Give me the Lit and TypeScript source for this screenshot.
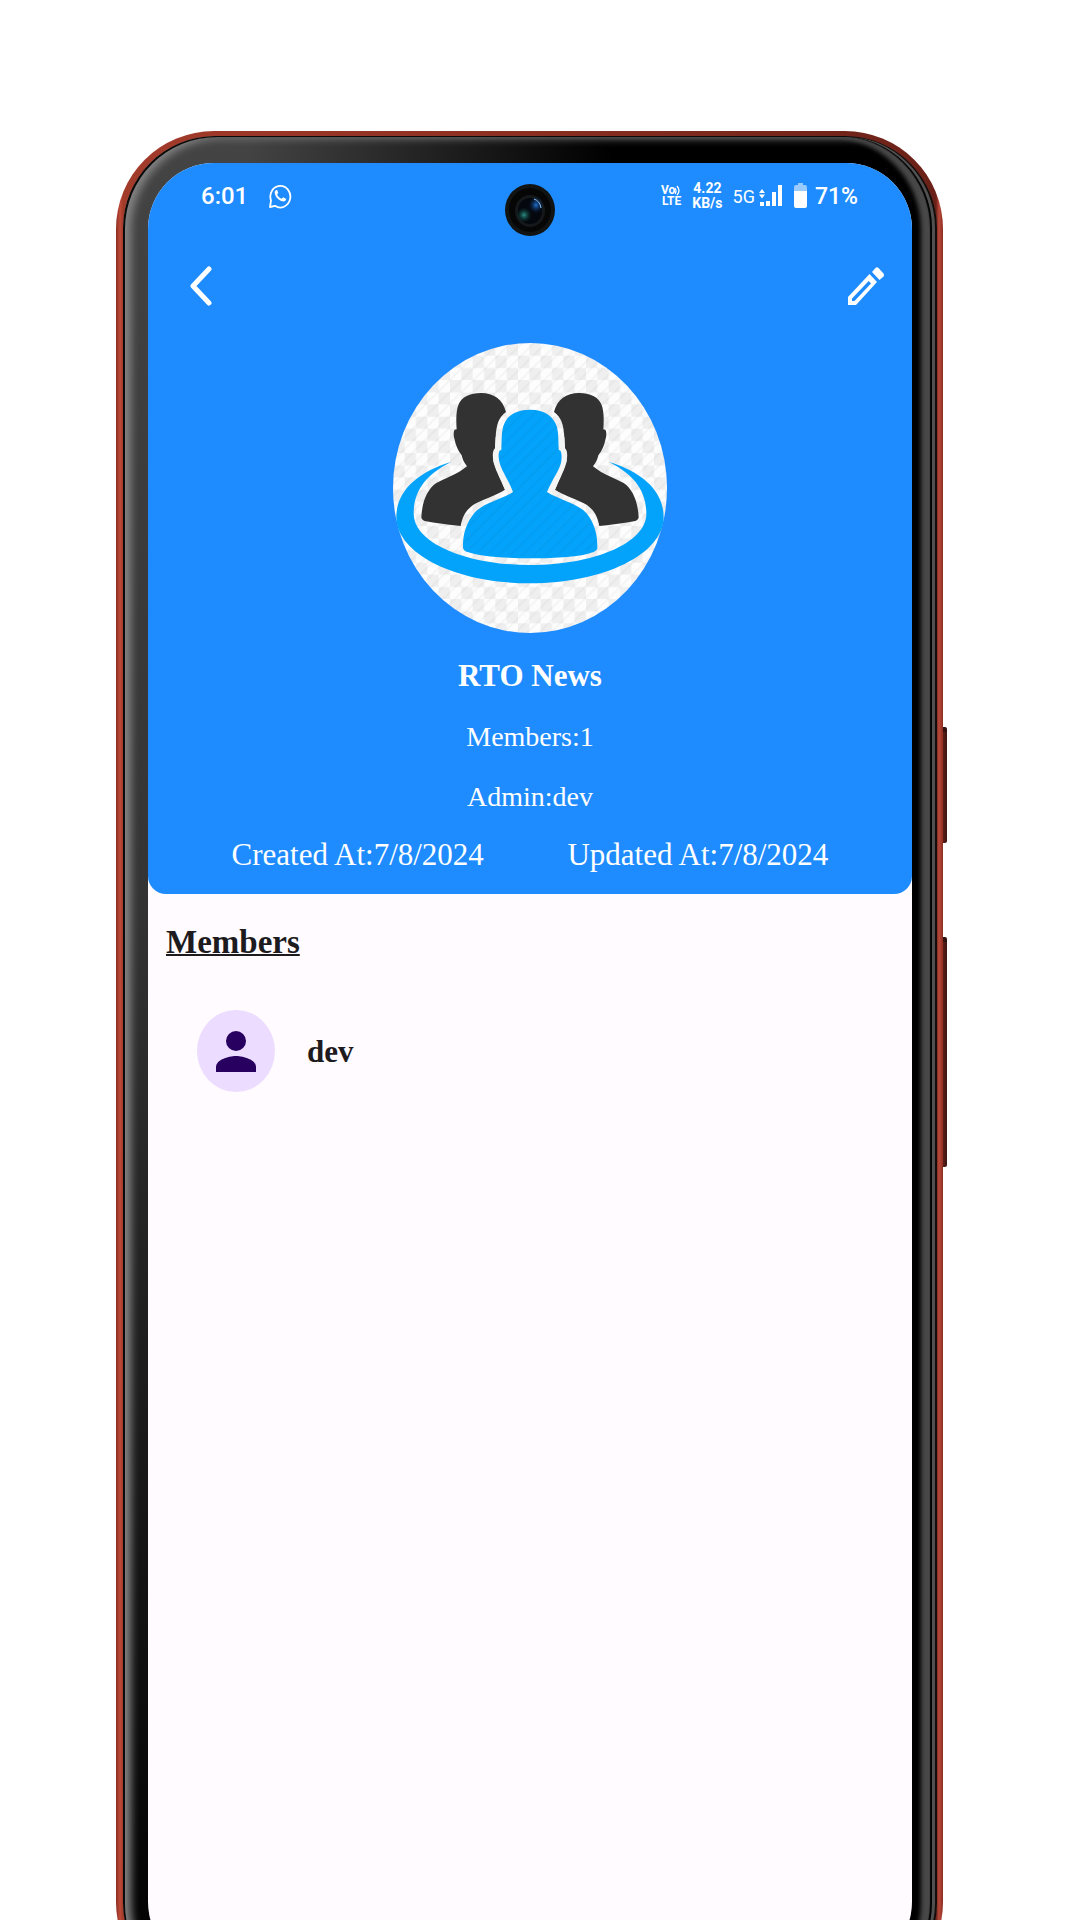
import { LitElement, html, css, svg } from "lit";
import { customElement, property } from "lit/decorators.js";

interface Member {
  name: string;
}

@customElement("status-bar")
class StatusBar extends LitElement {
  static styles = css`
    :host {
      display: flex;
      align-items: center;
      justify-content: space-between;
      height: 66px;
      padding: 0 54px 0 53px;
      color: #fff;
      font-family: Roboto, sans-serif;
      font-weight: 500;
    }
    .side {
      display: flex;
      align-items: center;
    }
    .left {
      gap: 20px;
      font-size: 24px;
    }
    .volte {
      margin-right: 10px;
    }
    .lines {
      display: flex;
      flex-direction: column;
      font-weight: 700;
    }
    .lines small {
      font-size: 12px;
      line-height: 11px;
    }
    .vo {
      display: flex;
    }
    .rate {
      font-size: 14px;
      line-height: 15px;
      margin-right: 10px;
    }
    .net {
      font-size: 18px;
      font-weight: 400;
      margin-right: 4px;
    }
    .battery {
      margin: 0 8px 0 12px;
    }
    .pct {
      font-size: 23px;
    }
    svg {
      display: block;
      fill: currentColor;
    }
  `;

  render() {
    return html`
      <div class="side left">
        <span>6:01</span>
        <svg width="24" height="26" viewBox="0 0 24 26" role="img" aria-label="WhatsApp">
          <path d="M2 24l1-6.500A10 10.800 0 1 1 7 22.800z" fill="none" stroke="#fff" stroke-width="1.800" stroke-linejoin="round" />
          <path d="M8.300 7c-1.600.8-2 2.500-1.300 4.400 1.500 3.900 4.600 6.600 8.300 7.200 1.500.1 2.800-.9 2.900-2.500l-3-1.800-1.600 1.500c-2.200-.9-3.700-2.500-4.500-4.600L10.300 9.900 9.200 7z" />
        </svg>
      </div>
      <div class="side">
        <div class="lines volte">
          <small class="vo">Vo<svg width="7" height="11" viewBox="0 0 7 11" aria-hidden="true"><path d="M0 3q2 3 0 6M2 1q4 5 0 9" fill="none" stroke="#fff" stroke-width="1.300" /></svg></small>
          <small>LTE</small>
        </div>
        <div class="lines rate"><span>4.22</span><span>KB/s</span></div>
        <span class="net">5G</span>
        <svg width="23" height="22" viewBox="0 0 23 22" role="img" aria-label="Signal">
          <path d="M0 8l3-4 3 4zM0 9.500h6l-3 4zM1 17h4v4H1zM7 16h4v5H7zM13 7h4v14h-4zM19 0h4v21h-4z" />
        </svg>
        <svg class="battery" width="13" height="26" viewBox="0 0 13 26" role="img" aria-label="Battery">
          <path d="M4 0h5v2h2q2 0 2 2v4H0V4q0-2 2-2h2z" opacity=".55" />
          <path d="M0 8h13v15q0 2-2 2H2q-2 0-2-2z" />
        </svg>
        <span class="pct">71%</span>
      </div>
    `;
  }
}

@customElement("group-avatar")
class GroupAvatar extends LitElement {
  static styles = css`
    :host,
    svg {
      display: block;
    }
  `;

  render() {
    const side = svg`
      <path fill="#323232" d="M123 560C126 510 142 476 168 458C190 446 232 432 260 408C250 396 246 384 244 375C232 358 226 345 223 328C219 318 219 304 223 298L229 297C227 270 227 240 235 222C244 200 268 188 302 188C340 188 368 208 377 245C356 260 348 282 346 320L344 354C337 360 336 372 339 392C342 412 360 446 374 478C350 494 300 510 278 524C256 540 246 560 241 587C204 583 165 579 133 572Q123 568 123 560Z" />`;
    return html`
      <svg width="274" height="290" viewBox="38 38 822 870" role="img" aria-label="Group picture">
        <defs>
          <clipPath id="round"><ellipse cx="449" cy="473" rx="411" ry="435" /></clipPath>
          <pattern id="checker" x="5" y="3" width="68" height="73" patternUnits="userSpaceOnUse">
            <path fill="#fdfdfd" d="M0 0h68v73H0z" />
            <path fill="#efefef" d="M0 0h34v37H0zM34 37h34v36H34z" />
          </pattern>
          <pattern id="stripe" width="25" height="25" patternUnits="userSpaceOnUse" patternTransform="rotate(45)">
            <path fill="#000" opacity=".03" d="M0 0h6v25H0z" />
          </pattern>
        </defs>
        <g clip-path="url(#round)">
          <path fill="url(#checker)" d="M38 38h822v870H38z" />
          <path fill="url(#stripe)" d="M38 38h822v870H38z" />
        </g>
        ${side}
        <g transform="matrix(-1 0 0 1 898 0)">${side}</g>
        <path fill="#03a3fb" d="M212 395C110 425 48 484 48 560C48 670 226 759 449 759S850 670 850 560C850 484 788 425 686 395C760 432 798 480 798 550C798 638 640 704 449 704S100 638 100 550C100 480 138 432 212 395Z" />
        <path fill="#f3f4f4" d="M346 320L344 354L339 392L374 478L398 485L358 398L363 358L366 310ZM552 320L554 354L559 392L524 478L500 485L540 398L535 358L532 310Z" />
        <path fill="#03a3fb" d="M449 238C495 238 520 258 530 290C535 310 534 335 535 358L541 362Q546 375 542 398C534 425 520 440 500 485C530 506 590 518 618 548C642 578 652 610 651 655Q646 664 632 667C575 690 323 690 262 665Q250 662 248 652C247 610 258 578 282 548C308 518 368 506 398 485C380 440 366 425 358 398Q352 375 357 362L363 358C364 335 363 310 368 290C378 258 403 238 449 238Z" />
        <path fill="url(#stripe)" d="M368 290Q390 240 449 240T530 290L542 390L500 485Q640 520 650 655Q449 700 250 655Q258 520 398 485L357 390Z" />
      </svg>
    `;
  }
}

@customElement("app-root")
class AppRoot extends LitElement {
  @property() groupName = "RTO News";
  @property() admin = "dev";
  @property() createdAt = "7/8/2024";
  @property() updatedAt = "7/8/2024";
  @property({ attribute: false }) members: Member[] = [{ name: "dev" }];

  static styles = css`
    :host {
      display: flex;
      flex-direction: column;
      box-sizing: border-box;
      height: 100vh;
      overflow: hidden;
      padding: 131px 137px 0 116px;
      background: #fff;
      font-family: "Liberation Serif", serif;
    }
    .phone {
      position: relative;
      flex: 1;
      display: flex;
      margin-bottom: -80px;
      padding: 5px 6px 5px 7px;
      border-radius: 98px;
      background: linear-gradient(to right, #8c2d20, #bd4a38 4px, #a33b2b 7px, #8a2f22 50%, #6b2118 calc(100% - 7px), #b8493a calc(100% - 4px), #8c2d20);
    }
    .key {
      position: absolute;
      left: 100%;
      width: 4px;
      border-radius: 0 2px 2px 0;
      background: linear-gradient(to right, #5e2018, #3c1410);
      border-top: 5px solid #301210;
      box-sizing: border-box;
    }
    .volume {
      top: 596px;
      height: 116px;
    }
    .power {
      top: 806px;
      height: 230px;
    }
    .bezel {
      flex: 1;
      display: flex;
      padding: 27px 25px 27px 25px;
      border-radius: 92px;
      background: linear-gradient(to right, transparent 15%, #000 60%),
        linear-gradient(#444, #343434 40%, #000);
      box-shadow: inset 2px 1px 0 #0a0a0a, inset -2px 0 0 #140c0a,
        inset -5px 0 0 #505050, inset -7px 0 1px #000,
        inset -16px 1px 4px #484848, inset 8px 2px 8px #858585;
    }
    .screen {
      position: relative;
      flex: 1;
      min-width: 0;
      overflow: hidden;
      border-radius: 66px;
      background: #fffbff;
      color: #1d1b1e;
    }
    .camera {
      position: absolute;
      top: 21px;
      left: 50%;
      margin-left: -25px;
    }
    .head {
      padding-bottom: 21px;
      border-radius: 0 0 18px 18px;
      background: #1e8cff;
      color: #fff;
      text-align: center;
    }
    .bar {
      display: flex;
      justify-content: space-between;
      align-items: center;
      height: 114px;
      padding: 0 24px 0 37px;
      box-sizing: border-box;
    }
    button {
      display: block;
      padding: 4px;
      border: 0;
      background: none;
      color: #fff;
    }
    svg {
      display: block;
    }
    .avatar {
      display: flex;
      justify-content: center;
    }
    h1,
    h2,
    p,
    ul {
      margin: 0;
      padding: 0;
    }
    h1 {
      margin-top: 24px;
      font-size: 31px;
      line-height: 38px;
    }
    p {
      font-size: 28px;
      line-height: 36px;
    }
    .fact {
      margin-top: 24px;
    }
    .dates {
      display: flex;
      justify-content: space-evenly;
      margin-top: 22px;
    }
    .dates p {
      font-size: 31px;
    }
    .list {
      padding: 27px 18px;
    }
    h2 {
      font-size: 33px;
      line-height: 42px;
      text-decoration: underline;
      text-decoration-thickness: 2px;
    }
    li {
      display: flex;
      align-items: center;
      gap: 32px;
      padding: 47px 31px;
      font-size: 31px;
      font-weight: 700;
    }
  `;

  render() {
    return html`
      <main class="phone">
        <span class="key volume"></span>
        <span class="key power"></span>
        <div class="bezel">
          <div class="screen">
            <header class="head">
              <status-bar></status-bar>
              <nav class="bar">
                <button aria-label="Back">
                  <svg width="24" height="40" viewBox="0 0 24 40" fill="none" stroke="currentColor" stroke-width="5" stroke-linecap="round" stroke-linejoin="round">
                    <path d="M20 3L4 20l16 17" />
                  </svg>
                </button>
                <button aria-label="Edit">
                  <svg width="36" height="38" viewBox="0 0 36 38" fill="currentColor">
                    <path fill-rule="evenodd" d="M0 30L21.500 7l7.500 8L8 38H0zM4 31.500V34h2.500L23 16.500 20.700 14z" />
                    <path d="M24 5l3.500-4q1.500-1.500 3 0l5 5.500q1 1.500 0 3L31.500 13z" />
                  </svg>
                </button>
              </nav>
              <div class="avatar"><group-avatar></group-avatar></div>
              <h1>${this.groupName}</h1>
              <p class="fact">Members:${this.members.length}</p>
              <p class="fact">Admin:${this.admin}</p>
              <div class="dates">
                <p>Created At:${this.createdAt}</p>
                <p>Updated At:${this.updatedAt}</p>
              </div>
            </header>
            <section class="list">
              <h2>Members</h2>
              <ul>
                ${this.members.map(
                  (m) => html`<li>
                    <svg width="78" height="83" viewBox="0 0 78 83" aria-hidden="true">
                      <ellipse cx="39" cy="41" rx="39" ry="41" fill="#ecdcff" />
                      <ellipse cx="39" cy="31" rx="10" ry="10" fill="#270060" />
                      <path d="M19 62v-5c0-7 12-11 20-11s20 4 20 11v5z" fill="#270060" />
                    </svg>
                    <span>${m.name}</span>
                  </li>`,
                )}
              </ul>
            </section>
            <svg class="camera" width="50" height="52" viewBox="0 0 50 52" aria-hidden="true">
              <defs>
                <radialGradient id="blue"><stop offset="0" stop-color="#1f6fd0" /><stop offset="1" stop-color="#06142c" stop-opacity="0" /></radialGradient>
                <radialGradient id="teal"><stop offset="0" stop-color="#2a8f86" /><stop offset="1" stop-color="#0a2a2a" stop-opacity="0" /></radialGradient>
              </defs>
              <ellipse cx="25" cy="26" rx="25" ry="26" fill="#121414" />
              <ellipse cx="25" cy="26" rx="21" ry="22" fill="#060606" />
              <ellipse cx="25" cy="27" rx="15" ry="16" fill="#15181a" />
              <ellipse cx="25" cy="27" rx="12" ry="13" fill="#04070d" />
              <ellipse cx="31" cy="21" rx="8" ry="9" fill="url(#blue)" />
              <ellipse cx="19" cy="31" rx="8" ry="8" fill="url(#teal)" />
              <path d="M29 15q6 2 7 9" fill="none" stroke="#8ec5ff" stroke-width="1" />
            </svg>
          </div>
        </div>
      </main>
    `;
  }
}
